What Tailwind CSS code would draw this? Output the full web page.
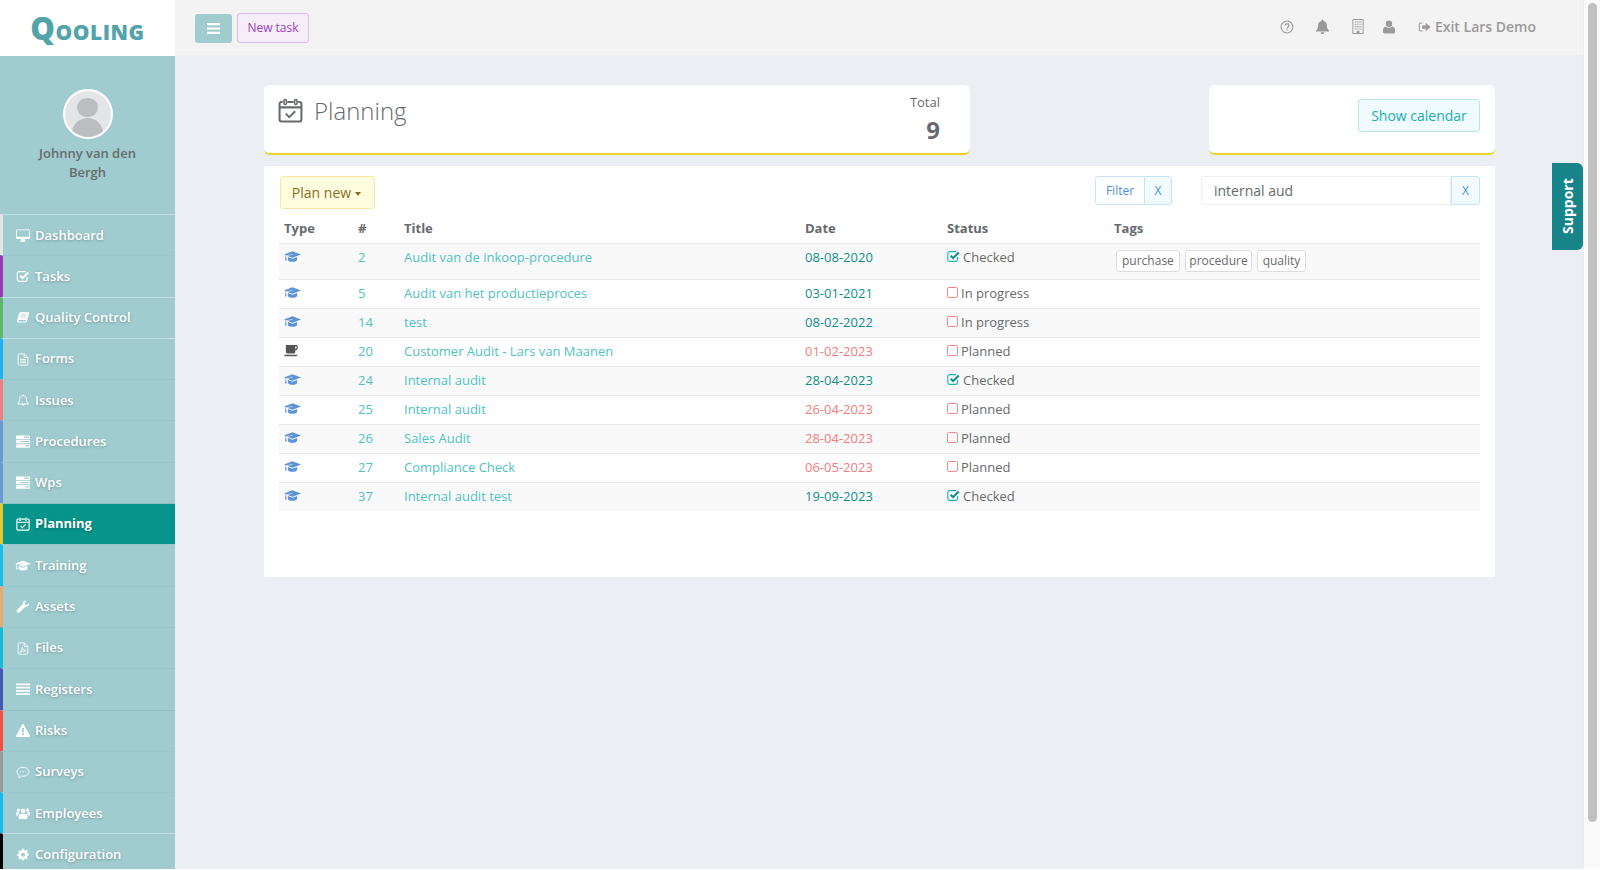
<!doctype html>
<html lang="en" class="bg-white">
  <head>
    <meta charset="UTF-8" />
    <title>Qooling - Planning</title>
    <script src="https://cdn.jsdelivr.net/npm/@tailwindcss/browser@4"></script>
  </head>
  <body class="h-[869px] overflow-hidden flex bg-[#ebeef3] font-['Open_Sans',sans-serif] text-[13px] text-[#676a6c]">
    <svg class="hidden">
      <symbol id="i-cap" viewBox="0 0 24 17" fill="currentColor">
        <path d="M12 .5 24 5 12 9.6 4.2 6.6 12.2 5.4 12 4.6 3 6 3 7.6 3.7 13.5 1.4 13.5 2.2 7.4 2.2 5.6 0 5z" />
        <path d="M5.4 8.4 12 11 18.6 8.4V12c0 2-3 3.4-6.6 3.4S5.4 14 5.4 12z" />
      </symbol>
      <symbol id="i-desktop" viewBox="0 0 16 14" fill="currentColor">
        <path d="M1.3 0h13.4C15.4 0 16 .6 16 1.3v8.4c0 .7-.6 1.3-1.3 1.3H10c0 1 .6 1.5.8 2.2v.8H5.2v-.8C5.500 12.500 6 12 6 11H1.300C.6 11 0 10.400 0 9.700V1.300C0 .6.6 0 1.300 0zM1 1v7.500h14V1z" fill-rule="evenodd" />
      </symbol>
      <symbol id="i-check" viewBox="0 0 16 16" fill="none" stroke="currentColor">
        <path stroke-width="1.400" d="M13 8.500v3.300A2.200 2.200 0 0 1 10.800 14H3.200A2.200 2.200 0 0 1 1 11.800V4.200A2.200 2.200 0 0 1 3.200 2h8" />
        <path stroke-width="2.400" d="m4.500 7 3 3 7-7" />
      </symbol>
      <symbol id="i-book" viewBox="0 0 16 16" fill="currentColor">
        <path d="M4.500 1.500h10.300c.7 0 1 .5.800 1.200l-2.700 9.300c-.3 1.200-1.100 2.200-2.600 2.200H2.600C1.200 14.200.3 13.200.6 11.700c.1-.7.300-1 .6-1.500L3.300 2.700c.2-.7.600-1.200 1.200-1.200zM5.700 4.200 5.400 5.200h6.800l.3-1zM4.900 6.800l-.3 1h6.800l.3-1zM2.800 11.200c-.8.800-.6 1.700.3 1.700h7.400c.5 0 .8-.3 1-.7l.3-1z" fill-rule="evenodd" />
      </symbol>
      <symbol id="i-file" viewBox="0 0 14 16" fill="none" stroke="currentColor">
        <path d="M8.500 1H2.300C1.600 1 1 1.600 1 2.300v11.400c0 .7.600 1.300 1.300 1.300h9.400c.7 0 1.300-.6 1.300-1.300V5.500zM8.500 1v4.500H13" />
        <path d="M3.500 8h7M3.500 10h7M3.500 12h7" />
      </symbol>
      <symbol id="i-pdf" viewBox="0 0 14 16" fill="none" stroke="currentColor">
        <path d="M8.500 1H2.300C1.600 1 1 1.600 1 2.300v11.400c0 .7.600 1.300 1.300 1.300h9.400c.7 0 1.300-.6 1.300-1.300V5.500zM8.500 1v4.500H13" />
        <path d="M3 12.500c1.500-.8 2.800-3.500 3.200-6 .4 2.300 2 4 4.800 4.200-2.400 0-5 .6-8 1.800z" />
      </symbol>
      <symbol id="i-bell-o" viewBox="0 0 16 16" fill="none" stroke="currentColor">
        <path stroke-width="1.100" d="M8 2c-2.800 0-4.300 2-4.300 4.300 0 3.400-1.200 4.700-2.400 6h13.400c-1.200-1.300-2.400-2.600-2.400-6C12.300 4 10.800 2 8 2zM8 2V.8M6.300 12.500a1.800 1.800 0 0 0 3.400 0" />
      </symbol>
      <symbol id="i-bell" viewBox="0 0 16 16" fill="currentColor">
        <path d="M8 .5c.6 0 1 .4 1 1v.7c2.300.4 3.700 2.200 3.700 4.500 0 3.200 1.100 4.500 2.300 5.800v.7H1v-.7c1.200-1.300 2.300-2.600 2.300-5.800C3.300 4.400 4.700 2.600 7 2.200v-.7c0-.6.400-1 1-1zM6 14.200h4a2 2 0 0 1-4 0z" />
      </symbol>
      <symbol id="i-tasks" viewBox="0 0 16 14" fill="currentColor">
        <path fill-rule="evenodd" d="M.8 0h14.400c.4 0 .8.300.8.800v2.400c0 .4-.4.800-.8.800H.8C.4 4 0 3.600 0 3.200V.8C0 .3.400 0 .8 0zM9 1.300v1.400h6V1.300zM.8 5h14.400c.4 0 .8.300.8.800v2.400c0 .4-.4.800-.8.800H.8C.4 9 0 8.600 0 8.200V5.800C0 5.300.4 5 .8 5zM5 6.300v1.400h10V6.300zM.8 10h14.400c.4 0 .8.300.8.800v2.400c0 .4-.4.800-.8.800H.8c-.4 0-.8-.4-.8-.8v-2.400c0-.5.400-.8.800-.8zM11 11.300v1.400h4v-1.400z" />
      </symbol>
      <symbol id="i-calendar" viewBox="0 0 16 16" fill="none" stroke="currentColor">
        <path stroke-width="1.300" d="M3 2.500H2.200C1.500 2.500 1 3 1 3.700v10.100c0 .7.500 1.200 1.200 1.200h11.600c.7 0 1.200-.5 1.200-1.200V3.700c0-.7-.5-1.200-1.200-1.200H13M6 2.500h4M1 6h14" />
        <rect x="3.800" y="1" width="1.600" height="3.200" rx=".8" stroke-width="1" />
        <rect x="10.600" y="1" width="1.600" height="3.200" rx=".8" stroke-width="1" />
        <path stroke-width="1.200" d="m5 10 2.200 2.200L11 8.500" />
      </symbol>
      <symbol id="i-wrench" viewBox="0 0 16 16" fill="currentColor">
        <path d="M15.500 3.600c.3 2.500-1.800 5-4.700 4.700L4 15.200c-.8.800-2.100.8-2.900 0l-.3-.3c-.8-.8-.8-2.100 0-2.900l6.900-6.800C7.400 2.300 10 .2 12.500.5l-2.600 2.700.6 2.300 2.300.6z" />
      </symbol>
      <symbol id="i-lines" viewBox="0 0 16 14" fill="currentColor">
        <path d="M0 0h16v2H0zM0 3.800h16v2H0zM0 7.600h16v2H0zM0 11.400h16v2H0z" />
      </symbol>
      <symbol id="i-bars" viewBox="0 0 13 11" fill="currentColor">
        <path d="M0 0h13v2.200H0zM0 4.400h13v2.200H0zM0 8.800h13V11H0z" />
      </symbol>
      <symbol id="i-warn" viewBox="0 0 16 15" fill="currentColor">
        <path fill-rule="evenodd" d="M8 0c.4 0 .8.200 1 .6l6.800 12.600c.4.800-.1 1.700-1 1.700H1.200c-.9 0-1.400-.9-1-1.700L7 .6C7.200.200 7.600 0 8 0zM6.900 4.600l.3 5.400h1.600l.3-5.400zM6.900 11.100v2h2.200v-2z" />
      </symbol>
      <symbol id="i-comment" viewBox="0 0 16 15" fill="none" stroke="currentColor">
        <path d="M8 1.500c-3.900 0-7 2.300-7 5.200 0 1.800 1.200 3.300 3 4.300-.1 1-.6 1.800-1.200 2.500 1.500-.2 2.800-1 3.800-1.900l1.400.1c3.900 0 7-2.200 7-5 0-2.900-3.100-5.200-7-5.200z" />
        <path stroke-dasharray="1.300 1.700" stroke-width="1.300" d="M4.700 6.700h7" />
      </symbol>
      <symbol id="i-users" viewBox="0 0 16 13" fill="currentColor">
        <circle cx="8" cy="3.600" r="2.600" /><circle cx="2.800" cy="2.600" r="1.800" /><circle cx="13.200" cy="2.600" r="1.800" />
        <path d="M4.600 7.200h6.800c1 0 1.600.8 1.600 1.800v2.600c0 .8-.5 1.200-1.200 1.200H4.200C3.500 12.800 3 12.400 3 11.600V9c0-1 .6-1.800 1.600-1.800zM0 5.800c0-.7.600-1.100 1.200-1.100h2c-.2.800.1 1.400.5 1.800-1 .3-1.700 1.100-1.900 2.400H.8c-.5 0-.8-.3-.8-.8zM16 5.800c0-.7-.6-1.100-1.200-1.100h-2c.2.800-.1 1.400-.5 1.800 1 .3 1.700 1.100 1.900 2.400h1c.5 0 .8-.3.800-.8z" />
      </symbol>
      <symbol id="i-cog" viewBox="0 0 16 16" fill="currentColor">
        <path fill-rule="evenodd" d="M6.800 1h2.400l.4 1.900 1 .4 1.600-1 1.700 1.600-1.100 1.700.4 1 1.800.4v2.300l-1.800.4-.4 1 1 1.600-1.600 1.700-1.600-1-1 .4-.4 1.700H6.800l-.4-1.800-1-.4-1.600 1L2.100 12.700l1-1.600-.4-1L1 9.700V7.400l1.800-.4.400-1L2.100 4.400l1.700-1.700 1.600 1 1-.4zM8 5.800a2.500 2.500 0 1 0 0 5 2.500 2.500 0 0 0 0-5z" />
      </symbol>
      <symbol id="i-help" viewBox="0 0 16 16" fill="none" stroke="currentColor">
        <circle cx="8" cy="8" r="6.800" stroke-width="1.200" />
        <path stroke-width="1.400" d="M5.800 6.300C5.900 5 6.800 4.300 8 4.300c1.300 0 2.200.8 2.200 1.900 0 1.700-2.200 1.700-2.200 3.400" />
        <path stroke-width="1.600" d="M8 10.700v1.400" />
      </symbol>
      <symbol id="i-building" viewBox="0 0 12 16" fill="currentColor">
        <path fill-rule="evenodd" d="M.8 0h10.400c.4 0 .8.300.8.800v14.400c0 .4-.4.800-.8.800H.8c-.5 0-.8-.4-.8-.8V.8C0 .3.300 0 .8 0zM1 1v14h3.500v-2.500h3V15H11V1zM2.500 2.500h1.200v1.200H2.500zM4.500 2.500h1.200v1.200H4.500zM6.500 2.500h1.200v1.200H6.500zM8.500 2.500h1.200v1.200H8.500zM2.500 5h1.200v1.200H2.500zM4.500 5h1.200v1.200H4.500zM6.500 5h1.200v1.200H6.500zM8.500 5h1.200v1.200H8.500zM2.500 7.500h1.200v1.200H2.500zM4.500 7.500h1.200v1.200H4.500zM6.500 7.500h1.200v1.200H6.500zM8.500 7.500h1.200v1.200H8.500zM2.500 10h1.200v1.200H2.500zM4.500 10h1.200v1.200H4.500zM6.500 10h1.200v1.200H6.500zM8.500 10h1.200v1.200H8.500z" />
      </symbol>
      <symbol id="i-user" viewBox="0 0 14 16" fill="currentColor">
        <circle cx="7" cy="4.200" r="3.700" />
        <path d="M3 7.500c1 1 2.500 1.500 4 1.500s3-.5 4-1.500c1.800.3 3 2 3 4.500v1.800c0 1-.7 1.700-1.700 1.700H1.700C.7 15.500 0 14.800 0 13.800V12c0-2.500 1.200-4.200 3-4.500z" />
      </symbol>
      <symbol id="i-exit" viewBox="0 0 16 14" fill="currentColor">
        <path d="M5.500 1.500H3C1.700 1.500 1 2.300 1 3.500v7c0 1.200.7 2 2 2h2.500v-1.300H3.200c-.6 0-.9-.3-.9-.9V3.700c0-.6.300-.9.900-.9h2.300z" />
        <path d="M9.500 1.800 15.500 7l-6 5.200V9H5V5h4.500z" />
      </symbol>
      <symbol id="i-coffee" viewBox="0 0 16 14" fill="currentColor">
        <path fill-rule="evenodd" d="M2 0h12c1.200 0 2 1 2 2.500S15.200 6 14 6h-1v1.500C13 9 12 10 10.500 10h-6C3 10 2 9 2 7.500zM13 1.500V4.500h.8c.4 0 .7-.8.7-1.500s-.3-1.500-.7-1.500z" />
        <path d="M0 11.500h15.500c0 1-.7 1.500-1.500 1.500H1.500C.7 13 0 12.500 0 11.500z" />
      </symbol>
      <symbol id="i-checked" viewBox="0 0 16 16" fill="none">
        <path stroke="#22b3b8" stroke-width="1.400" d="M13 8.500v3.300A2.200 2.200 0 0 1 10.800 14H3.200A2.200 2.200 0 0 1 1 11.800V4.200A2.200 2.200 0 0 1 3.200 2h8" />
        <path stroke="#0e8f8a" stroke-width="2.600" d="m4.500 7 3 3 7-7" />
      </symbol>
    </svg>

    <!-- Sidebar -->
    <aside class="w-[175px] shrink-0 h-full overflow-hidden bg-[#a0cccf] flex flex-col">
      <div class="h-[56px] shrink-0 bg-white flex items-center justify-center">
        <span class="font-extrabold text-[#52a4aa] leading-none text-[21px] tracking-[0.5px] flex items-baseline"><span class="text-[31px] font-extrabold">Q</span>OOLING</span>
      </div>
      <div class="h-[158px] shrink-0 flex flex-col items-center pt-[33px]">
        <div class="w-[50px] h-[50px] rounded-full border-[2px] border-white bg-[#e4e5e7] overflow-hidden flex flex-col items-center">
          <span class="mt-[7px] w-[21px] h-[21px] rounded-full bg-[#bcbdc1]"></span>
          <span class="mt-[1px] w-[31px] h-[20px] rounded-t-full bg-[#bcbdc1]"></span>
        </div>
        <p class="mt-[5px] w-[120px] text-center font-semibold leading-[19px] text-[#676a6c]">Johnny van den Bergh</p>
      </div>
      <nav class="text-white font-semibold [text-shadow:0_1px_3px_rgba(0,0,0,0.25)]">
        <a class="h-[41.3px] flex items-center gap-[5px] border-l-[3px] border-l-[#e4e4e4] border-t border-t-[#c2dfe0] pl-[13px] pt-[1px]"><svg class="w-[14px] h-[13px]"><use href="#i-desktop" /></svg>Dashboard</a>
        <a class="h-[41.3px] flex items-center gap-[5px] border-l-[3px] border-l-[#9b36b7] border-t border-t-[#97c7ca] pl-[13px]"><svg class="w-[14px] h-[13px]"><use href="#i-check" /></svg>Tasks</a>
        <a class="h-[41.3px] flex items-center gap-[5px] border-l-[3px] border-l-[#5bb76a] border-t border-t-[#c2dfe0] pl-[13px]"><svg class="w-[14px] h-[13px]"><use href="#i-book" /></svg>Quality Control</a>
        <a class="h-[41.3px] flex items-center gap-[5px] border-l-[3px] border-l-[#1fb0f5] border-t border-t-[#c2dfe0] pl-[13px]"><svg class="w-[14px] h-[13px]"><use href="#i-file" /></svg>Forms</a>
        <a class="h-[41.3px] flex items-center gap-[5px] border-l-[3px] border-l-[#f08080] border-t border-t-[#97c7ca] pl-[13px]"><svg class="w-[14px] h-[13px]"><use href="#i-bell-o" /></svg>Issues</a>
        <a class="h-[41.3px] flex items-center gap-[5px] border-l-[3px] border-l-[#6c96d6] border-t border-t-[#97c7ca] pl-[13px]"><svg class="w-[14px] h-[13px]"><use href="#i-tasks" /></svg>Procedures</a>
        <a class="h-[41.3px] flex items-center gap-[5px] border-l-[3px] border-l-[#6c96d6] border-t border-t-[#97c7ca] pl-[13px]"><svg class="w-[14px] h-[13px]"><use href="#i-tasks" /></svg>Wps</a>
        <a class="h-[41.3px] flex items-center gap-[5px] border-l-[3px] border-l-[#e8c92c] border-t border-t-[#8fc0c3] pl-[13px] bg-[#07948a] font-bold"><svg class="w-[14px] h-[14px]"><use href="#i-calendar" /></svg>Planning</a>
        <a class="h-[41.3px] flex items-center gap-[4px] border-l-[3px] border-l-[#16bfe8] border-t border-t-[#97c7ca] pl-[12px]"><svg class="w-[16px] h-[12px]"><use href="#i-cap" /></svg>Training</a>
        <a class="h-[41.3px] flex items-center gap-[5px] border-l-[3px] border-l-[#e9ab6d] border-t border-t-[#97c7ca] pl-[13px]"><svg class="w-[14px] h-[13px]"><use href="#i-wrench" /></svg>Assets</a>
        <a class="h-[41.3px] flex items-center gap-[5px] border-l-[3px] border-l-[#10bcd8] border-t border-t-[#97c7ca] pl-[13px]"><svg class="w-[14px] h-[13px]"><use href="#i-pdf" /></svg>Files</a>
        <a class="h-[41.3px] flex items-center gap-[5px] border-l-[3px] border-l-[#4a55b8] border-t border-t-[#97c7ca] pl-[13px]"><svg class="w-[14px] h-[13px]"><use href="#i-lines" /></svg>Registers</a>
        <a class="h-[41.3px] flex items-center gap-[5px] border-l-[3px] border-l-[#f44d3f] border-t border-t-[#8fc0c3] pl-[13px]"><svg class="w-[14px] h-[13px]"><use href="#i-warn" /></svg>Risks</a>
        <a class="h-[41.3px] flex items-center gap-[5px] border-l-[3px] border-l-[#9a9a9a] border-t border-t-[#97c7ca] pl-[13px]"><svg class="w-[14px] h-[13px]"><use href="#i-comment" /></svg>Surveys</a>
        <a class="h-[41.3px] flex items-center gap-[5px] border-l-[3px] border-l-[#14bdf0] border-t border-t-[#97c7ca] pl-[13px]"><svg class="w-[14px] h-[13px]"><use href="#i-users" /></svg>Employees</a>
        <a class="h-[41.3px] flex items-center gap-[5px] border-l-[3px] border-l-black border-t border-t-[#c2dfe0] pl-[13px]"><svg class="w-[14px] h-[13px]"><use href="#i-cog" /></svg>Configuration</a>
      </nav>
    </aside>

    <!-- Main -->
    <div class="relative w-[1408px] shrink-0 flex flex-col">
      <header class="h-[55px] shrink-0 bg-[#f3f3f4] flex items-center pl-[20px] pr-[47px] pt-[1px]">
        <button class="w-[37px] h-[29px] rounded-[3px] bg-[#a0cccf] text-white flex items-center justify-center"><svg class="w-[13px] h-[11px]"><use href="#i-bars" /></svg></button>
        <button class="ml-[5px] w-[72px] h-[30px] rounded-[3px] border border-[#dcbfe6] bg-[#f5edf8] text-[12px] text-[#9b3fc0]">New task</button>
        <div class="ml-auto mt-[-3px] flex items-center text-[#9a9a9a]">
          <svg class="w-[14px] h-[14px]"><use href="#i-help" /></svg>
          <svg class="ml-[21px] w-[15px] h-[15px]"><use href="#i-bell" /></svg>
          <svg class="ml-[22px] w-[12px] h-[15px]"><use href="#i-building" /></svg>
          <svg class="ml-[19px] w-[12px] h-[14px]"><use href="#i-user" /></svg>
          <svg class="ml-[23px] w-[13px] h-[12px]"><use href="#i-exit" /></svg>
          <span class="ml-[4px] text-[14px] font-semibold text-[#9a9a9a]">Exit Lars Demo</span>
        </div>
      </header>

      <main class="pl-[89px] pr-[88px] pt-[30px]">
        <div class="flex justify-between">
          <section class="w-[706px] h-[70px] rounded-[6px] bg-white border-b-2 border-b-[#f0d020] flex justify-between pl-[14px] pr-[30px]">
            <div class="flex items-start pt-[12px]">
              <svg class="w-[25px] h-[25px] text-[#676a6c] mt-[1px]"><use href="#i-calendar" /></svg>
              <h1 class="ml-[11px] text-[24px] font-light leading-[28px] text-[#676a6c]">Planning</h1>
            </div>
            <div class="text-right pt-[7px]">
              <p class="text-[13px] leading-[20px]">Total</p>
              <p class="text-[24px] font-bold leading-[34px] mt-[1px]">9</p>
            </div>
          </section>
          <section class="w-[286px] h-[70px] rounded-[6px] bg-white border-b-2 border-b-[#f0d020] flex justify-end items-start pt-[14px] pr-[15px]">
            <button class="w-[122px] h-[33px] rounded-[3px] border border-[#b8e3e8] bg-[#effbfc] text-[14px] text-[#22aeb6]">Show calendar</button>
          </section>
        </div>

        <section class="mt-[11px] h-[411px] bg-white px-[15px] pt-[10px]">
          <div class="flex items-start">
            <button class="ml-[1px] w-[95px] h-[33px] pr-[2px] rounded-[3px] border border-[#f6e8a3] bg-[#fffde0] text-[14px] text-[#8a6d1c] flex items-center justify-center gap-[4px]">Plan new <span class="w-0 h-0 border-x-[3.500px] border-x-transparent border-t-[4px] border-t-[#8a6d1c] mt-[2px]"></span></button>
            <div class="ml-auto flex h-[29px] rounded-[3px] border border-[#c3e6f7] text-[12px] text-[#4a90d9]">
              <span class="w-[48px] flex items-center justify-center">Filter</span>
              <span class="w-[27px] flex items-center justify-center border-l border-l-[#c3e6f7] bg-[#f1faff] rounded-r-[3px]">X</span>
            </div>
            <div class="ml-[29px] flex h-[29px]">
              <input class="w-[250px] h-full rounded-l-[3px] border border-[#eeeeee] pl-[12px] text-[14px] text-[#676a6c] outline-none" value="internal aud" />
              <span class="w-[29px] flex items-center justify-center rounded-r-[3px] border border-[#c3e6f7] bg-[#f1faff] text-[12px] text-[#4a90d9]">X</span>
            </div>
          </div>

          <table class="mt-[5px] w-full table-fixed border-collapse text-left">
            <colgroup>
              <col class="w-[75px]" /><col class="w-[46px]" /><col class="w-[401px]" /><col class="w-[142px]" /><col class="w-[167px]" /><col />
            </colgroup>
            <thead>
              <tr class="h-[29px] font-bold">
                <th class="pl-[5px]">Type</th><th class="pl-[4px]">#</th><th class="pl-[4px]">Title</th><th class="pl-[4px]">Date</th><th class="pl-[4px]">Status</th><th class="pl-[4px]">Tags</th>
              </tr>
            </thead>
            <tbody class="[&_td]:pl-[4px] [&_td]:pt-[3px] [&_td]:pb-[5px] [&_td]:align-top [&_td]:leading-[20px] [&_td:first-child]:pl-[5px]">
              <tr class="h-[36px] border-t border-t-[#e7e7e7] bg-[#f9f9f9]">
                <td class="text-[#5c92d6]"><svg class="w-[17px] h-[12px] mt-[4px]"><use href="#i-cap" /></svg></td>
                <td class="text-[#4fc2c4]">2</td><td class="text-[#4fc2c4]">Audit van de inkoop-procedure</td><td class="text-[#0e8f8a]">08-08-2020</td>
                <td><span class="flex items-center gap-[3px]"><svg class="w-[13px] h-[13px]"><use href="#i-checked" /></svg>Checked</span></td>
                <td class="!pt-[6px] !pb-[6px]"><span class="flex gap-[5px] pl-[2px] text-[12px] leading-[20px]">
                  <span class="px-[5px] rounded-[3px] border border-[#dddddd] bg-white">purchase</span><span class="px-[3.500px] rounded-[3px] border border-[#dddddd] bg-white">procedure</span><span class="px-[4.500px] rounded-[3px] border border-[#dddddd] bg-white">quality</span>
                </span></td>
              </tr>
              <tr class="h-[29px] border-t border-t-[#e7e7e7]">
                <td class="text-[#5c92d6]"><svg class="w-[17px] h-[12px] mt-[4px]"><use href="#i-cap" /></svg></td>
                <td class="text-[#4fc2c4]">5</td><td class="text-[#4fc2c4]">Audit van het productieproces</td><td class="text-[#0e8f8a]">03-01-2021</td>
                <td><span class="flex items-center gap-[3px]"><span class="w-[11px] h-[11px] rounded-[2px] border border-[#f58a8a]"></span>In progress</span></td><td></td>
              </tr>
              <tr class="h-[29px] border-t border-t-[#e7e7e7] bg-[#f9f9f9]">
                <td class="text-[#5c92d6]"><svg class="w-[17px] h-[12px] mt-[4px]"><use href="#i-cap" /></svg></td>
                <td class="text-[#4fc2c4]">14</td><td class="text-[#4fc2c4]">test</td><td class="text-[#0e8f8a]">08-02-2022</td>
                <td><span class="flex items-center gap-[3px]"><span class="w-[11px] h-[11px] rounded-[2px] border border-[#f58a8a]"></span>In progress</span></td><td></td>
              </tr>
              <tr class="h-[29px] border-t border-t-[#e7e7e7]">
                <td class="text-[#555555]"><svg class="w-[14px] h-[12px] mt-[4px]"><use href="#i-coffee" /></svg></td>
                <td class="text-[#4fc2c4]">20</td><td class="text-[#4fc2c4]">Customer Audit - Lars van Maanen</td><td class="text-[#f47c7c]">01-02-2023</td>
                <td><span class="flex items-center gap-[3px]"><span class="w-[11px] h-[11px] rounded-[2px] border border-[#f58a8a]"></span>Planned</span></td><td></td>
              </tr>
              <tr class="h-[29px] border-t border-t-[#e7e7e7] bg-[#f9f9f9]">
                <td class="text-[#5c92d6]"><svg class="w-[17px] h-[12px] mt-[4px]"><use href="#i-cap" /></svg></td>
                <td class="text-[#4fc2c4]">24</td><td class="text-[#4fc2c4]">Internal audit</td><td class="text-[#0e8f8a]">28-04-2023</td>
                <td><span class="flex items-center gap-[3px]"><svg class="w-[13px] h-[13px]"><use href="#i-checked" /></svg>Checked</span></td><td></td>
              </tr>
              <tr class="h-[29px] border-t border-t-[#e7e7e7]">
                <td class="text-[#5c92d6]"><svg class="w-[17px] h-[12px] mt-[4px]"><use href="#i-cap" /></svg></td>
                <td class="text-[#4fc2c4]">25</td><td class="text-[#4fc2c4]">Internal audit</td><td class="text-[#f47c7c]">26-04-2023</td>
                <td><span class="flex items-center gap-[3px]"><span class="w-[11px] h-[11px] rounded-[2px] border border-[#f58a8a]"></span>Planned</span></td><td></td>
              </tr>
              <tr class="h-[29px] border-t border-t-[#e7e7e7] bg-[#f9f9f9]">
                <td class="text-[#5c92d6]"><svg class="w-[17px] h-[12px] mt-[4px]"><use href="#i-cap" /></svg></td>
                <td class="text-[#4fc2c4]">26</td><td class="text-[#4fc2c4]">Sales Audit</td><td class="text-[#f47c7c]">28-04-2023</td>
                <td><span class="flex items-center gap-[3px]"><span class="w-[11px] h-[11px] rounded-[2px] border border-[#f58a8a]"></span>Planned</span></td><td></td>
              </tr>
              <tr class="h-[29px] border-t border-t-[#e7e7e7]">
                <td class="text-[#5c92d6]"><svg class="w-[17px] h-[12px] mt-[4px]"><use href="#i-cap" /></svg></td>
                <td class="text-[#4fc2c4]">27</td><td class="text-[#4fc2c4]">Compliance Check</td><td class="text-[#f47c7c]">06-05-2023</td>
                <td><span class="flex items-center gap-[3px]"><span class="w-[11px] h-[11px] rounded-[2px] border border-[#f58a8a]"></span>Planned</span></td><td></td>
              </tr>
              <tr class="h-[29px] border-t border-t-[#e7e7e7] bg-[#f9f9f9]">
                <td class="text-[#5c92d6]"><svg class="w-[17px] h-[12px] mt-[4px]"><use href="#i-cap" /></svg></td>
                <td class="text-[#4fc2c4]">37</td><td class="text-[#4fc2c4]">Internal audit test</td><td class="text-[#0e8f8a]">19-09-2023</td>
                <td><span class="flex items-center gap-[3px]"><svg class="w-[13px] h-[13px]"><use href="#i-checked" /></svg>Checked</span></td><td></td>
              </tr>
            </tbody>
          </table>
        </section>
      </main>

      <!-- Support tab floats over the page edge -->
      <a class="absolute right-0 top-[163px] w-[31px] h-[87px] rounded-l-[6px] bg-[#17848a] text-white font-bold text-[14px] flex items-center justify-center [writing-mode:vertical-rl] rotate-180">Support</a>
    </div>

    <!-- Scrollbar -->
    <div class="w-[17px] shrink-0 bg-[#fafafa] border-l border-l-[#ececec] pl-[4px] pt-[3px]">
      <div class="w-[9px] h-[819px] rounded-full bg-[#c1c1c1]"></div>
    </div>
  </body>
</html>
